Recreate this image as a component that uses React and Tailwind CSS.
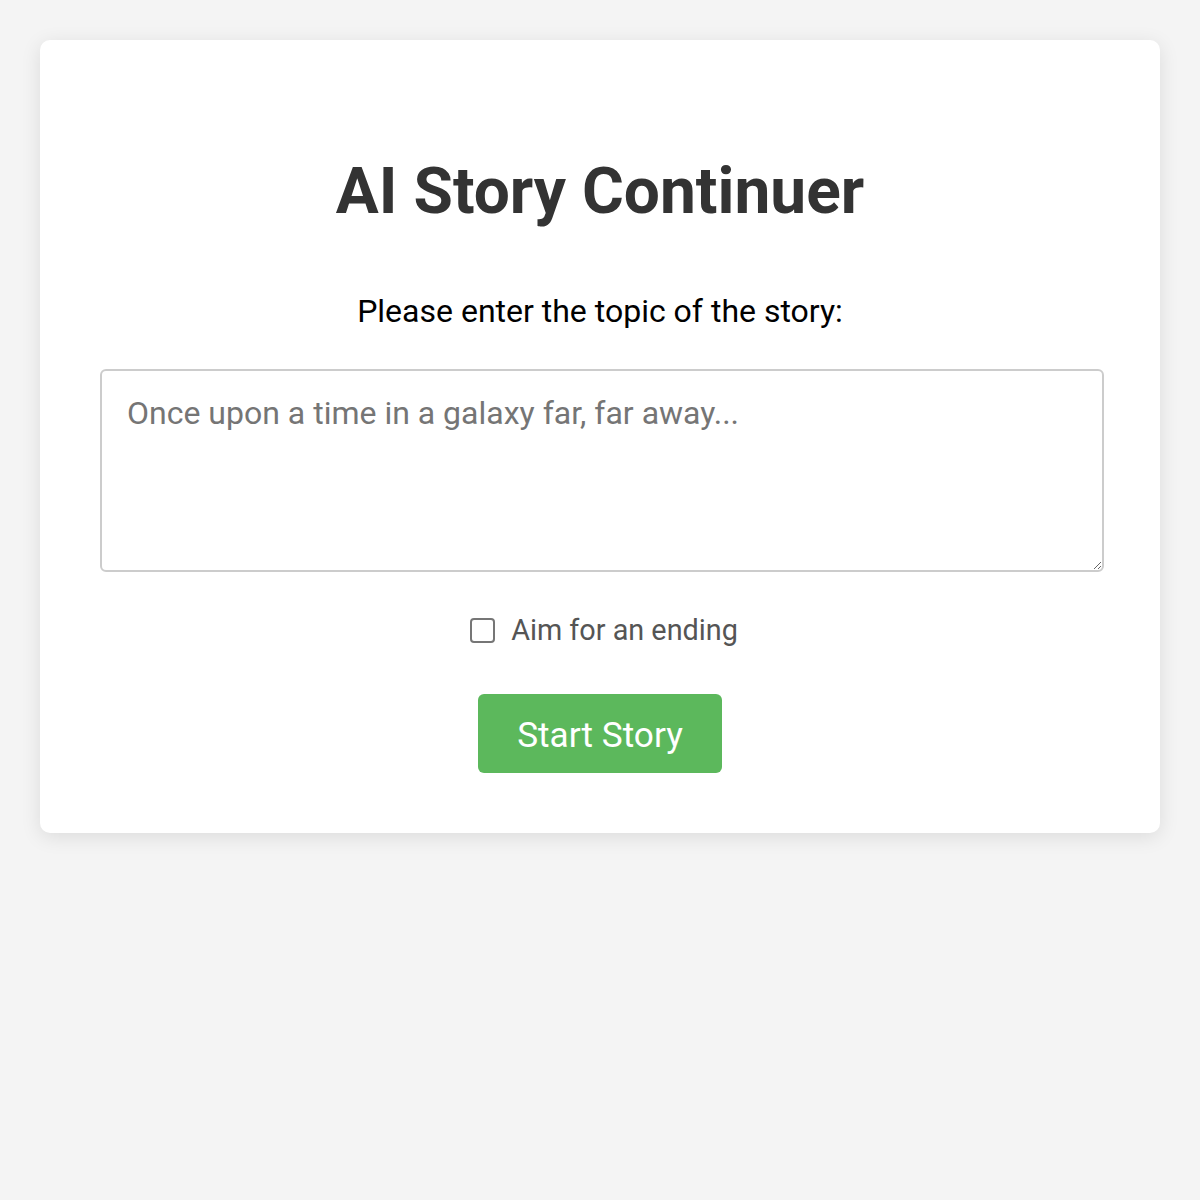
export default function App() {
  return (
    <div className="min-h-[1200px] bg-[#f4f4f4] pt-10 px-10" style={{ fontFamily: "Roboto, sans-serif" }}>
      <div className="bg-white rounded-[10px] shadow-[0_4px_20px_rgba(0,0,0,0.1)] h-[793px] px-[60px] flex flex-col items-center">
        <h1 className="mt-[120px] text-[64px] leading-none font-bold text-[#333]">AI Story Continuer</h1>
        <p className="mt-[71px] text-[32px] leading-none text-black">Please enter the topic of the story:</p>
        <textarea
          className="self-start mt-[42px] w-[1004px] h-[203px] border-2 border-[#ccc] rounded-[6px] pl-[25px] pr-6 pt-[26px] text-[32px] leading-none text-[#333] placeholder:text-[#757575] outline-none"
          placeholder="Once upon a time in a galaxy far, far away..."
        />
        <label className="mt-[44px] flex items-center gap-4 text-[28.8px] leading-none text-[#555]">
          <input type="checkbox" className="ml-2 w-[25px] h-[25px] appearance-none border-2 border-[#767676] rounded-[4px] bg-white" />
          Aim for an ending
        </label>
        <button className="mt-[49px] w-[244px] h-[79px] pt-1 bg-[#5cb85c] rounded-[6px] text-white text-[35.2px] leading-none">Start Story</button>
      </div>
    </div>
  );
}
